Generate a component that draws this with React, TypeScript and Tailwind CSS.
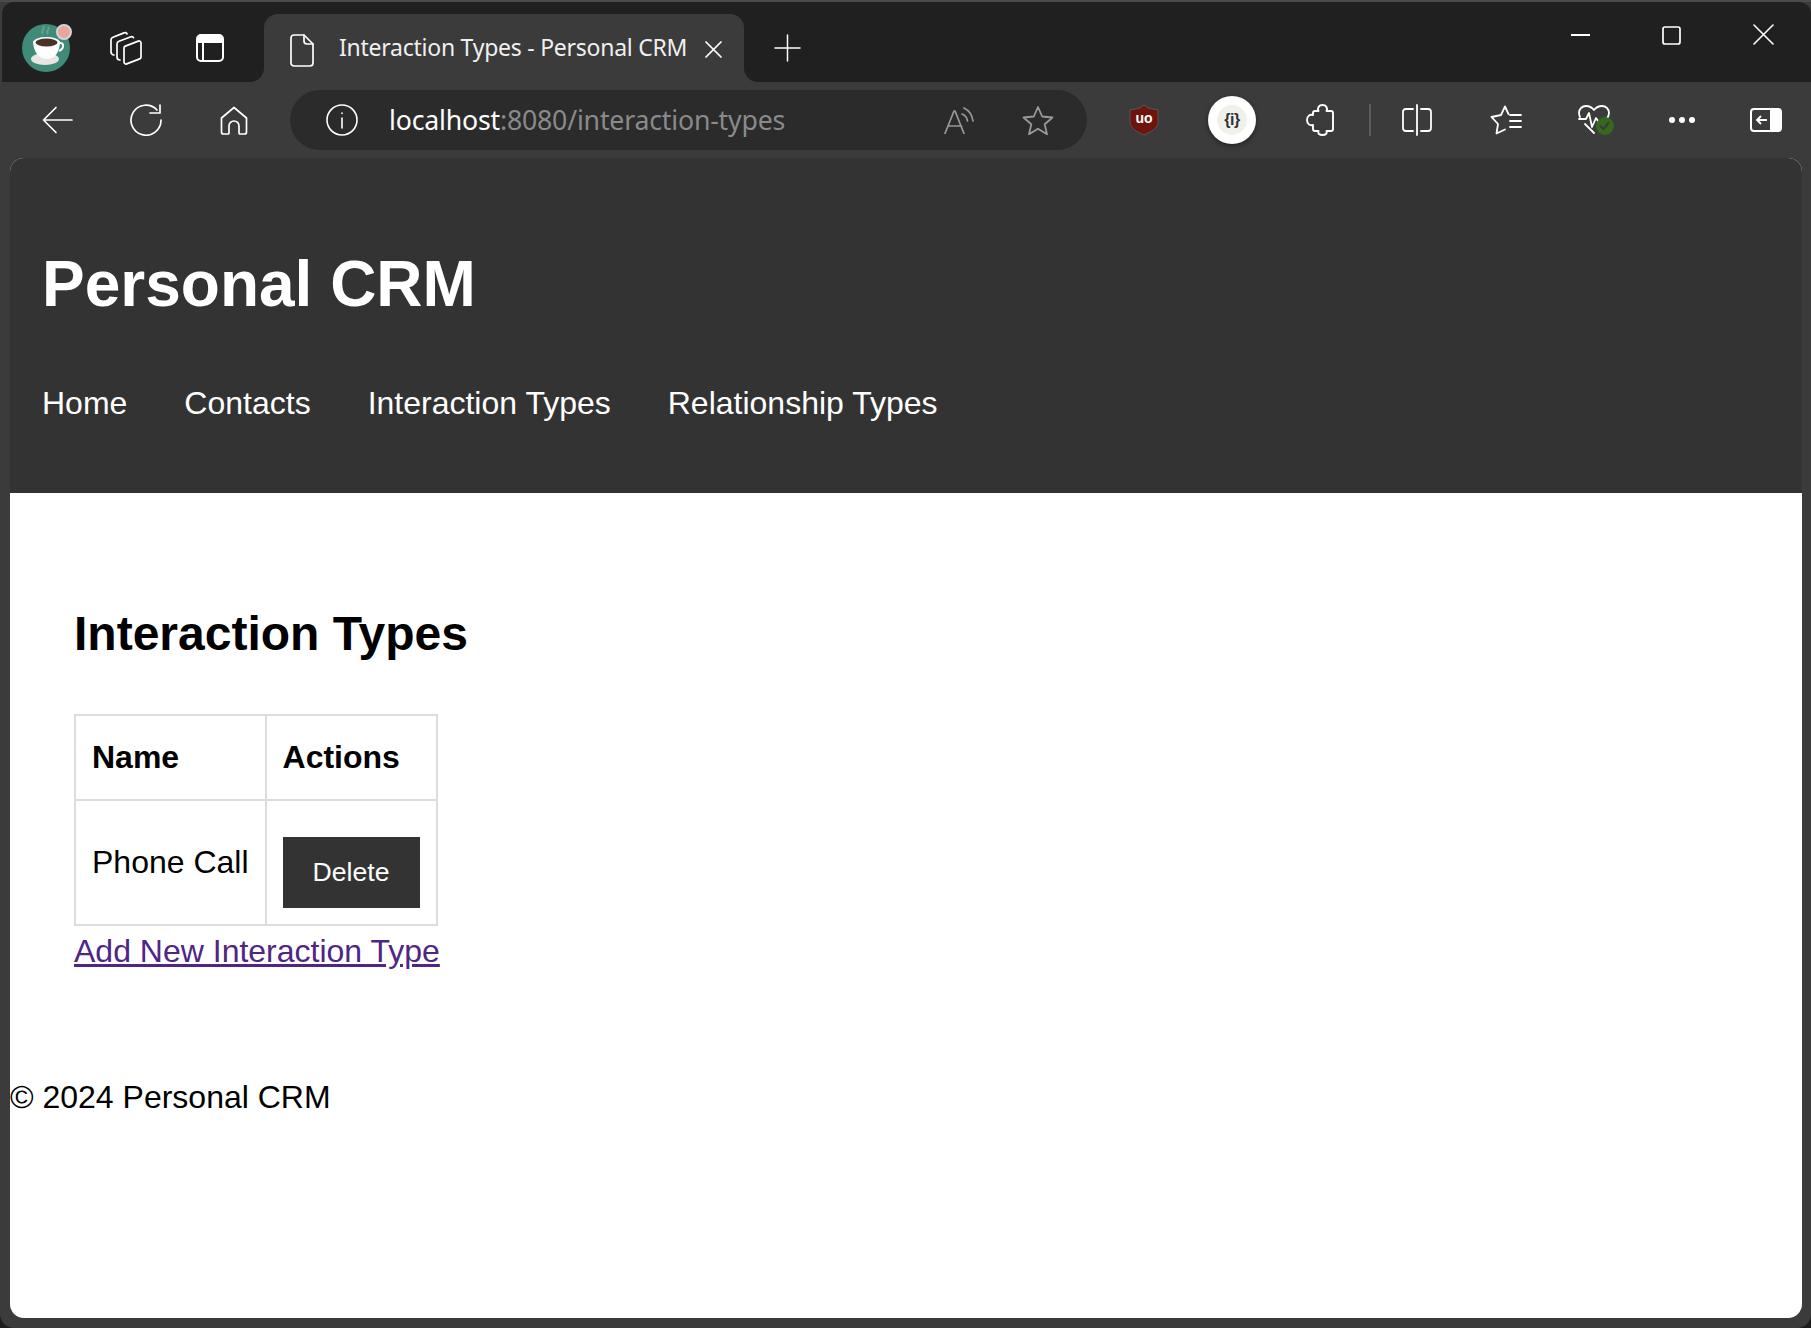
import React from 'react';

function Icon({ w, h, sw = 1.8, className = '', children }: { w: number; h: number; sw?: number; className?: string; children: React.ReactNode }) {
  return (
    <svg
      width={w}
      height={h}
      viewBox={`0 0 ${w} ${h}`}
      fill="none"
      stroke="currentColor"
      strokeWidth={sw}
      strokeLinecap="round"
      strokeLinejoin="round"
      className={`shrink-0 ${className}`}
    >
      {children}
    </svg>
  );
}

function CoffeeLogo() {
  return (
    <svg viewBox="0 0 52 52" className="w-[52px] h-[52px] shrink-0">
      <circle cx="24" cy="26" r="24" fill="#3f8a78" />
      <path d="M21 12c-3-3 3-5 0-8M26 12c-3-3 3-5 0-7" stroke="#5fa392" strokeWidth="2" fill="none" />
      <ellipse cx="23" cy="37" rx="14" ry="6" fill="#e8e6e2" />
      <path d="M11 19h27c0 9-4 18-13 18S11 28 11 19z" fill="#fff" />
      <ellipse cx="24.5" cy="20" rx="13" ry="5" fill="#fff" />
      <ellipse cx="24.5" cy="20.5" rx="11" ry="4" fill="#4a3226" />
      <path d="M37 21c5-1 6 5 0 8" stroke="#fff" strokeWidth="2" fill="none" />
      <circle cx="42" cy="10" r="7" fill="#e8a5a0" stroke="#d4d4d4" strokeWidth="2" />
    </svg>
  );
}

function TabBar() {
  return (
    <div className="flex items-start h-[80px] ml-[2px] pl-[20px] bg-[#202020] rounded-t-[12px] text-white">
      <div className="mt-[20px]">
        <CoffeeLogo />
      </div>
      <Icon w={36} h={36} sw={1.7} className="mt-[28px] ml-[34px]">
        <path d="M16 18a2 2 0 0 1 1.300-1.900l13-5a2 2 0 0 1 2.700 1.900v14a2 2 0 0 1-1.300 1.900l-13 5a2 2 0 0 1-2.700-1.900z" />
        <path d="M12 30a3 3 0 0 1-3-3V14a3 3 0 0 1 2-2.800l12-4.500a2 2 0 0 1 2.500 1" />
        <path d="M6 25a3 3 0 0 1-3-3V10a3 3 0 0 1 2-2.800l11-4.300a2 2 0 0 1 3 1" />
      </Icon>
      <svg viewBox="0 0 28 28" className="w-[28px] h-[28px] mt-[32px] ml-[52px] shrink-0 text-white">
        <rect x="1" y="1" width="26" height="26" rx="4" fill="none" stroke="currentColor" strokeWidth="2" />
        <path d="M1 5a4 4 0 0 1 4-4h18a4 4 0 0 1 4 4v4H1z" fill="currentColor" />
        <path d="M7 9v18" stroke="currentColor" strokeWidth="2" />
      </svg>

      <div className="relative mt-[12px] ml-[40px] w-[480px] h-[68px] bg-[#3b3b3b] rounded-t-[14px] flex items-start pt-[20px] pl-[26px] pr-[22px] shrink-0">
        {/* concave corners where the tab meets the toolbar */}
        <div className="absolute bottom-0 left-[-14px] w-[14px] h-[14px] bg-[#3b3b3b]">
          <div className="w-full h-full bg-[#202020] rounded-br-[14px]" />
        </div>
        <div className="absolute bottom-0 right-[-14px] w-[14px] h-[14px] bg-[#3b3b3b]">
          <div className="w-full h-full bg-[#202020] rounded-bl-[14px]" />
        </div>
        <Icon w={24} h={33} sw={1.7}>
          <path d="M4 1h10l9 9v19a3 3 0 0 1-3 3H4a3 3 0 0 1-3-3V4a3 3 0 0 1 3-3z" />
          <path d="M14 1v6a3 3 0 0 0 3 3h6" />
        </Icon>
        <span className="ml-[25px] mt-[-2px] flex-1 text-[23px] leading-[30px] tracking-[-0.25px] whitespace-nowrap text-[#f0f0f0] [font-family:'Noto_Sans',sans-serif]">
          Interaction Types - Personal CRM
        </span>
        <Icon w={17} h={17} sw={1.7} className="mt-[7px]">
          <path d="M1 1l15 15M16 1L1 16" />
        </Icon>
      </div>

      <Icon w={27} h={28} sw={1.5} className="mt-[32px] ml-[30px]">
        <path d="M13.500 1v26M1 14h25" />
      </Icon>

      <div className="ml-auto flex items-start pr-[37px]">
        <Icon w={19} h={2} sw={1.8} className="mt-[32px]">
          <path d="M0 1h19" />
        </Icon>
        <svg viewBox="0 0 19 19" className="w-[19px] h-[19px] mt-[24px] ml-[72px] shrink-0" fill="none" stroke="currentColor" strokeWidth="1.7">
          <rect x="1" y="1" width="17" height="17" rx="2" />
        </svg>
        <Icon w={21} h={21} sw={1.6} className="mt-[22px] ml-[72px]">
          <path d="M1 1l19 19M20 1L1 20" />
        </Icon>
      </div>
    </div>
  );
}

function Toolbar() {
  return (
    <div className="flex items-center h-[76px] pl-[42px] bg-[#3b3b3b] text-white">
      <Icon w={31} h={28} sw={1.7}>
        <path d="M30 14H2M14 1.500L1.500 14 14 26.500" />
      </Icon>
      <Icon w={32} h={32} sw={1.7} className="ml-[57px]">
        <path d="M27 6A15 15 0 1 0 31 16" />
        <path d="M30 1v8H20" />
      </Icon>
      <Icon w={28} h={29} sw={1.7} className="ml-[58px]">
        <path d="M14 1.500L26.500 12v14a2 2 0 0 1-2 2H20a1 1 0 0 1-1-1v-7a5 5 0 0 0-10 0v7a1 1 0 0 1-1 1H3.500a2 2 0 0 1-2-2V12z" />
      </Icon>

      <div className="ml-[42px] w-[797px] h-[60px] rounded-[30px] bg-[#2b2b2b] flex items-center pl-[36px] pr-[33px] shrink-0">
        <Icon w={32} h={32} sw={1.6}>
          <circle cx="16" cy="16" r="15" />
          <path d="M16 14v10M16 9v.5" />
        </Icon>
        <span className="ml-[31px] flex-1 text-[26.7px] leading-[36px] tracking-[-0.2px] whitespace-nowrap [font-family:'Noto_Sans',sans-serif]">
          localhost<span className="text-[#8a8a8a]">:8080/interaction-types</span>
        </span>
        <Icon w={30} h={28} sw={1.7} className="text-[#999]">
          <path d="M1 27.500L10 5h1l9 22.500M4.500 20h13" />
          <path d="M20 2c4 2 8 6 9 13M18 8c3 1 5 4 5.500 7" />
        </Icon>
        <Icon w={32} h={30} sw={1.8} className="ml-[48px] text-[#999]">
          <path d="M16 2l4.200 9.500 10.300 1-7.800 6.800 2.300 10L16 23.800l-9 5.500 2.300-10-7.800-6.800 10.300-1z" />
        </Icon>
      </div>

      <svg viewBox="0 0 30 32" className="w-[30px] h-[32px] ml-[42px] shrink-0">
        <path d="M15 1l4 3 10 2v12c0 6-7 10-14 13C8 28 1 24 1 18V6l10-2z" fill="#6f140c" stroke="#555" strokeWidth="1" />
        <text x="15" y="19" textAnchor="middle" fontSize="14" fontWeight="700" fill="#fff" fontFamily="Liberation Sans">uo</text>
      </svg>

      <div className="ml-[49px] w-[48px] h-[48px] rounded-full bg-white shadow-[0_2px_5px_rgba(0,0,0,0.4)] flex items-center justify-center shrink-0">
        <div className="w-[30px] h-[30px] rounded-full bg-[#f1f1ec] flex items-center justify-center text-[#333] text-[16px] font-bold tracking-[-0.5px] [font-family:'Liberation_Sans',sans-serif]">
          {'{i}'}
        </div>
      </div>

      <Icon w={28} h={32} sw={1.9} className="ml-[50px]">
        <path d="M9 7h3.500c-1.500-3 .500-6 4-6s5.500 3 4 6H25a2 2 0 0 1 2 2v16a2 2 0 0 1-2 2h-4.500c1 2.500-1 4-4 4s-5-1.500-4-4H9a2 2 0 0 1-2-2v-4c-3 1-6-1-6-5s3-6 6-5V9a2 2 0 0 1 2-2z" />
      </Icon>
      <div className="ml-[35px] w-[2px] h-[32px] bg-[#5c5c5c] shrink-0" />
      <Icon w={30} h={32} sw={1.8} className="ml-[31px]">
        <path d="M11 5H4a3 3 0 0 0-3 3v16a3 3 0 0 0 3 3h7M19 5h7a3 3 0 0 1 3 3v16a3 3 0 0 1-3 3h-7M15 1v30" />
      </Icon>
      <Icon w={32} h={30} sw={1.8} className="ml-[58px]">
        <path d="M15 1.500L11 10l-9.500 2L8 19l-1.500 9.500 8.500-4M15 1.500L18.500 9" />
        <path d="M20 10h11M20 16h11M20 22h11" />
      </Icon>
      <svg width="36" height="30" viewBox="0 0 36 30" fill="none" stroke="currentColor" strokeWidth="1.8" strokeLinecap="round" strokeLinejoin="round" className="ml-[56px] shrink-0">
        <path d="M2 12C1 10 1 9 1 8c0-4 3-7 7-7 3 0 6 1.500 8 4 2-2.500 5-4 8-4 4 0 7 3 7 7 0 2-1 4-2 6" />
        <path d="M1 14h7l3-6 3 14 4-9 2 3h3M7 19l9 9" />
        <circle cx="27" cy="21" r="9" fill="#35691f" stroke="none" />
        <path d="M22.500 21l3 3 5-6" stroke="#3b3b3b" strokeWidth="2" />
      </svg>
      <div className="ml-[55px] flex gap-[4px] shrink-0">
        <div className="w-[6px] h-[6px] rounded-full bg-white" />
        <div className="w-[6px] h-[6px] rounded-full bg-white" />
        <div className="w-[6px] h-[6px] rounded-full bg-white" />
      </div>
      <svg viewBox="0 0 32 24" className="w-[32px] h-[24px] ml-[55px] shrink-0">
        <rect x="1" y="1" width="30" height="22" rx="3" fill="none" stroke="#fff" strokeWidth="2" />
        <path d="M20 1h8a3 3 0 0 1 3 3v16a3 3 0 0 1-3 3h-8z" fill="#fff" />
        <path d="M17 12H7M11 8l-4 4 4 4" fill="none" stroke="#fff" strokeWidth="1.8" />
      </svg>
    </div>
  );
}

export default function App() {
  return (
    <div className="h-[1328px] overflow-hidden bg-[#1c1c1c] [font-family:'Liberation_Sans',Arial,sans-serif]">
      <div className="h-[2px] bg-[#4a4a50]" />
      <div className="h-[1326px] bg-[#3b3b3b] rounded-b-[14px] overflow-hidden">
        <TabBar />
        <Toolbar />
        <div className="ml-[10px] mr-[9px] h-[1160px] flex flex-col bg-white rounded-[14px] overflow-hidden">
          <header className="bg-[#333] text-white h-[335px] px-[32px] pt-[89px]">
            <h1 className="text-[64px] leading-[74px] font-bold">Personal CRM</h1>
            <nav className="mt-[64px] flex gap-[57px] text-[32px] leading-[37px]">
              <a>Home</a>
              <a>Contacts</a>
              <a>Interaction Types</a>
              <a>Relationship Types</a>
            </nav>
          </header>
          <main className="pl-[64px] pt-[113px]">
            <h2 className="text-[48px] leading-[55px] font-bold text-black">Interaction Types</h2>
            <table className="mt-[53px] border-collapse text-[32px] leading-[51px] text-black">
              <thead>
                <tr>
                  <th className="border-2 border-[#ddd] p-[16px] text-left font-bold">Name</th>
                  <th className="border-2 border-[#ddd] p-[16px] text-left font-bold">Actions</th>
                </tr>
              </thead>
              <tbody>
                <tr>
                  <td className="border-2 border-[#ddd] p-[16px]">Phone Call</td>
                  <td className="border-2 border-[#ddd] p-[16px]">
                    <button className="block mt-[20px] bg-[#333] text-white text-[26.67px] leading-[31px] px-[30px] py-[20px]">Delete</button>
                  </td>
                </tr>
              </tbody>
            </table>
            <a className="block text-[32px] leading-[51px] text-[#4f2585] underline">Add New Interaction Type</a>
          </main>
          <footer className="mt-[95px] text-[32px] leading-[51px] text-black">© 2024 Personal CRM</footer>
        </div>
      </div>
    </div>
  );
}
